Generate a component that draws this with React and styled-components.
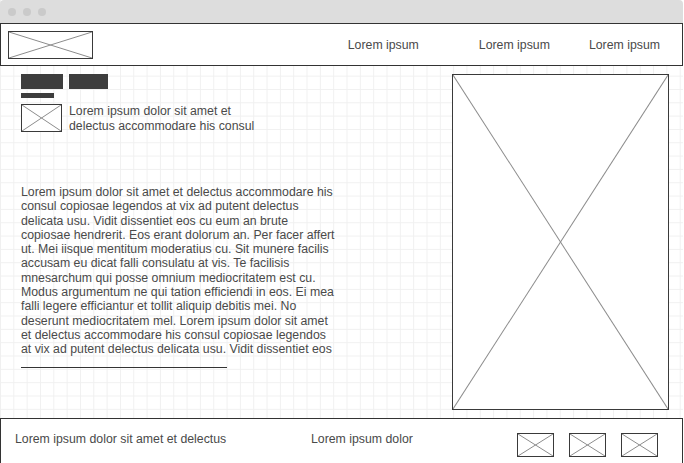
import React from "react";
import styled, { createGlobalStyle } from "styled-components";

const GlobalStyle = createGlobalStyle`
  html, body {
    margin: 0;
    padding: 0;
    background: #ffffff;
  }
  body {
    font-family: "Liberation Sans", Arial, sans-serif;
    color: #4a4a4a;
  }
`;

const NAV_ITEMS = [
  { id: "one", label: "Lorem ipsum", gap: 0 },
  { id: "two", label: "Lorem ipsum", gap: 60 },
  { id: "three", label: "Lorem ipsum", gap: 39 },
];

const INTRO_TEXT = "Lorem ipsum dolor sit amet et delectus accommodare his consul";

const BODY_TEXT =
  "Lorem ipsum dolor sit amet et delectus accommodare his consul copiosae legendos at vix ad putent delectus delicata usu. Vidit dissentiet eos cu eum an brute copiosae hendrerit. Eos erant dolorum an. Per facer affert ut. Mei iisque mentitum moderatius cu. Sit munere facilis accusam eu dicat falli consulatu at vis. Te facilisis mnesarchum qui posse omnium mediocritatem est cu. Modus argumentum ne qui tation efficiendi in eos. Ei mea falli legere efficiantur et tollit aliquip debitis mei. No deserunt mediocritatem mel. Lorem ipsum dolor sit amet et delectus accommodare his consul copiosae legendos at vix ad putent delectus delicata usu. Vidit dissentiet eos";

const Placeholder = ({ width, height, className }) => (
  <PlaceholderBox $width={width} $height={height} className={className}>
    <svg width="100%" height="100%" viewBox="0 0 100 100" preserveAspectRatio="none">
      <line x1="0" y1="0" x2="100" y2="100" stroke="#8c8c8c" strokeWidth="1" vectorEffect="non-scaling-stroke" />
      <line x1="100" y1="0" x2="0" y2="100" stroke="#8c8c8c" strokeWidth="1" vectorEffect="non-scaling-stroke" />
    </svg>
  </PlaceholderBox>
);

const App = () => {
  return (
    <>
      <GlobalStyle />
      <Window>
        <TitleBar>
          <Dot />
          <Dot />
          <Dot />
        </TitleBar>
        <Header>
          <Placeholder width={85} height={28} />
          <Nav>
            {NAV_ITEMS.map(({ id, label, gap }) => (
              <NavItem key={id} $gap={gap}>
                {label}
              </NavItem>
            ))}
          </Nav>
        </Header>
        <Main>
          <LeftColumn>
            <BarRow>
              <Bar $width={42} />
              <Bar $width={39} />
            </BarRow>
            <SmallBar />
            <IntroRow>
              <Placeholder width={41} height={28} />
              <IntroText>{INTRO_TEXT}</IntroText>
            </IntroRow>
            <BodyText>{BODY_TEXT}</BodyText>
            <Rule />
          </LeftColumn>
          <Placeholder width={217} height={336} />
        </Main>
        <Footer>
          <FooterText $width={296}>Lorem ipsum dolor sit amet et delectus</FooterText>
          <FooterText>Lorem ipsum dolor</FooterText>
          <FooterIcons>
            <Placeholder width={37} height={24} />
            <Placeholder width={37} height={24} />
            <Placeholder width={37} height={24} />
          </FooterIcons>
        </Footer>
      </Window>
    </>
  );
};

const Window = styled.div`
  position: relative;
  width: 683px;
  height: 463px;
  overflow: hidden;
  display: flex;
  flex-direction: column;
  background-color: #ffffff;
  background-image: linear-gradient(to right, #f0f0f0 1px, transparent 1px),
    linear-gradient(to bottom, #f0f0f0 1px, transparent 1px);
  background-size: 13.333px 13.333px;
  background-position: 0 9px;
`;

const TitleBar = styled.div`
  flex: 0 0 23px;
  display: flex;
  align-items: center;
  gap: 7px;
  padding: 0 0 0 8px;
  background: #dddddd;
  border-radius: 4px 4px 0 0;
  box-sizing: border-box;
`;

const Dot = styled.span`
  width: 8px;
  height: 8px;
  border-radius: 50%;
  background: #cacaca;
`;

const Header = styled.header`
  flex: 0 0 43px;
  display: flex;
  align-items: center;
  padding: 0 22px 0 7px;
  border: 1px solid #333333;
  background: #ffffff;
  box-sizing: border-box;
`;

const Nav = styled.nav`
  display: flex;
  margin-left: auto;
`;

const NavItem = styled.span`
  margin-left: ${({ $gap }) => $gap}px;
  font-size: 12.3px;
  color: #4a4a4a;
  white-space: nowrap;
`;

const PlaceholderBox = styled.div`
  flex: 0 0 auto;
  width: ${({ $width }) => $width}px;
  height: ${({ $height }) => $height}px;
  border: 1px solid #3a3a3a;
  background: #ffffff;
  box-sizing: border-box;
  svg {
    display: block;
  }
`;

const Main = styled.main`
  flex: 0 0 352px;
  display: flex;
  justify-content: space-between;
  align-items: flex-start;
  padding: 8px 14px 8px 21px;
  box-sizing: border-box;
`;

const LeftColumn = styled.div`
  width: 318px;
  display: flex;
  flex-direction: column;
`;

const BarRow = styled.div`
  display: flex;
  gap: 6px;
`;

const Bar = styled.div`
  width: ${({ $width }) => $width}px;
  height: 15px;
  background: #3d3d3d;
`;

const SmallBar = styled.div`
  width: 33px;
  height: 5px;
  margin-top: 4px;
  background: #3d3d3d;
`;

const IntroRow = styled.div`
  display: flex;
  align-items: flex-start;
  gap: 7px;
  margin-top: 6px;
`;

const IntroText = styled.p`
  margin: 0;
  width: 200px;
  font-size: 12.3px;
  line-height: 14.5px;
  color: #4a4a4a;
`;

const BodyText = styled.p`
  margin: 52px 0 0;
  font-size: 12.3px;
  line-height: 14.3px;
  color: #4a4a4a;
`;

const Rule = styled.div`
  width: 206px;
  height: 1px;
  margin-top: 10px;
  background: #333333;
`;

const Footer = styled.footer`
  flex: 0 0 60px;
  display: flex;
  align-items: flex-start;
  padding: 13px 24px 0 14px;
  border: 1px solid #333333;
  background: #ffffff;
  box-sizing: border-box;
`;

const FooterText = styled.span`
  width: ${({ $width }) => ($width ? `${$width}px` : "auto")};
  font-size: 12.3px;
  line-height: 14px;
  color: #4a4a4a;
  white-space: nowrap;
`;

const FooterIcons = styled.div`
  display: flex;
  gap: 15px;
  margin-left: auto;
  margin-top: 1px;
`;

export default App;
